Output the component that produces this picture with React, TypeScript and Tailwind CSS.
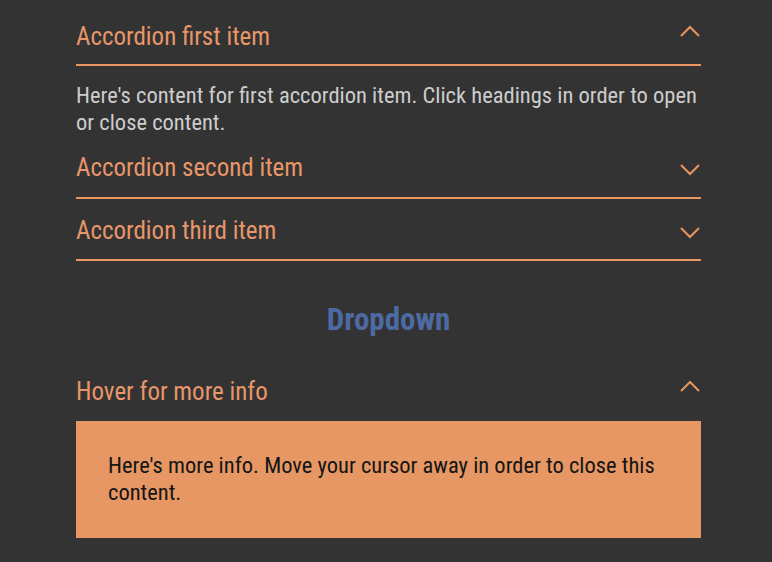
import React from "react";

const Up = () => (
  <svg width="22" height="14" viewBox="0 0 22 14" fill="none" stroke="#e8955f" strokeWidth="2">
    <path d="M2 12 L11 3 L20 12" />
  </svg>
);
const Down = () => (
  <svg width="22" height="14" viewBox="0 0 22 14" fill="none" stroke="#e8955f" strokeWidth="2">
    <path d="M2 3 L11 12 L20 3" />
  </svg>
);

export default function App() {
  const f = { fontFamily: "'Roboto Condensed', Roboto, sans-serif" } as React.CSSProperties;
  return (
    <div className="min-h-[562px] w-full bg-[#333333]" style={f}>
      <div className="w-[625px] ml-[76px] pt-[20px]">
        <div className="flex items-start justify-between border-b-2 border-[#e8955f] pb-[10px]">
          <span className="text-[25px] leading-[34px] text-[#e8966a]">Accordion first item</span>
          <span className="mt-[4px]"><Up /></span>
        </div>
        <p className="mt-[16px] text-[22.5px] leading-[27px] text-[#cdcdcd]">
          Here's content for first accordion item. Click headings in order to open or close content.
        </p>
        <div className="flex items-start justify-between border-b-2 border-[#e8955f] pb-[12px] mt-[15px]">
          <span className="text-[25px] leading-[34px] text-[#e8966a]">Accordion second item</span>
          <span className="mt-[11px]"><Down /></span>
        </div>
        <div className="flex items-start justify-between border-b-2 border-[#e8955f] pb-[11px] mt-[15px]">
          <span className="text-[25px] leading-[34px] text-[#e8966a]">Accordion third item</span>
          <span className="mt-[11px]"><Down /></span>
        </div>
        <div className="mt-[39px] text-center text-[31px] font-bold leading-[40px] text-[#4d6aa2]">
          Dropdown
        </div>
        <div className="mt-[35px] flex items-start justify-between pb-[12px]">
          <span className="text-[25px] leading-[34px] text-[#e8966a]">Hover for more info</span>
          <span className="mt-[4px]"><Up /></span>
        </div>
        <div className="bg-[#e69763] px-[32px] pt-[31px] pb-[32px] text-[22.5px] leading-[27px] text-[#151515]">
          Here's more info. Move your cursor away in order to close this content.
        </div>
      </div>
    </div>
  );
}
